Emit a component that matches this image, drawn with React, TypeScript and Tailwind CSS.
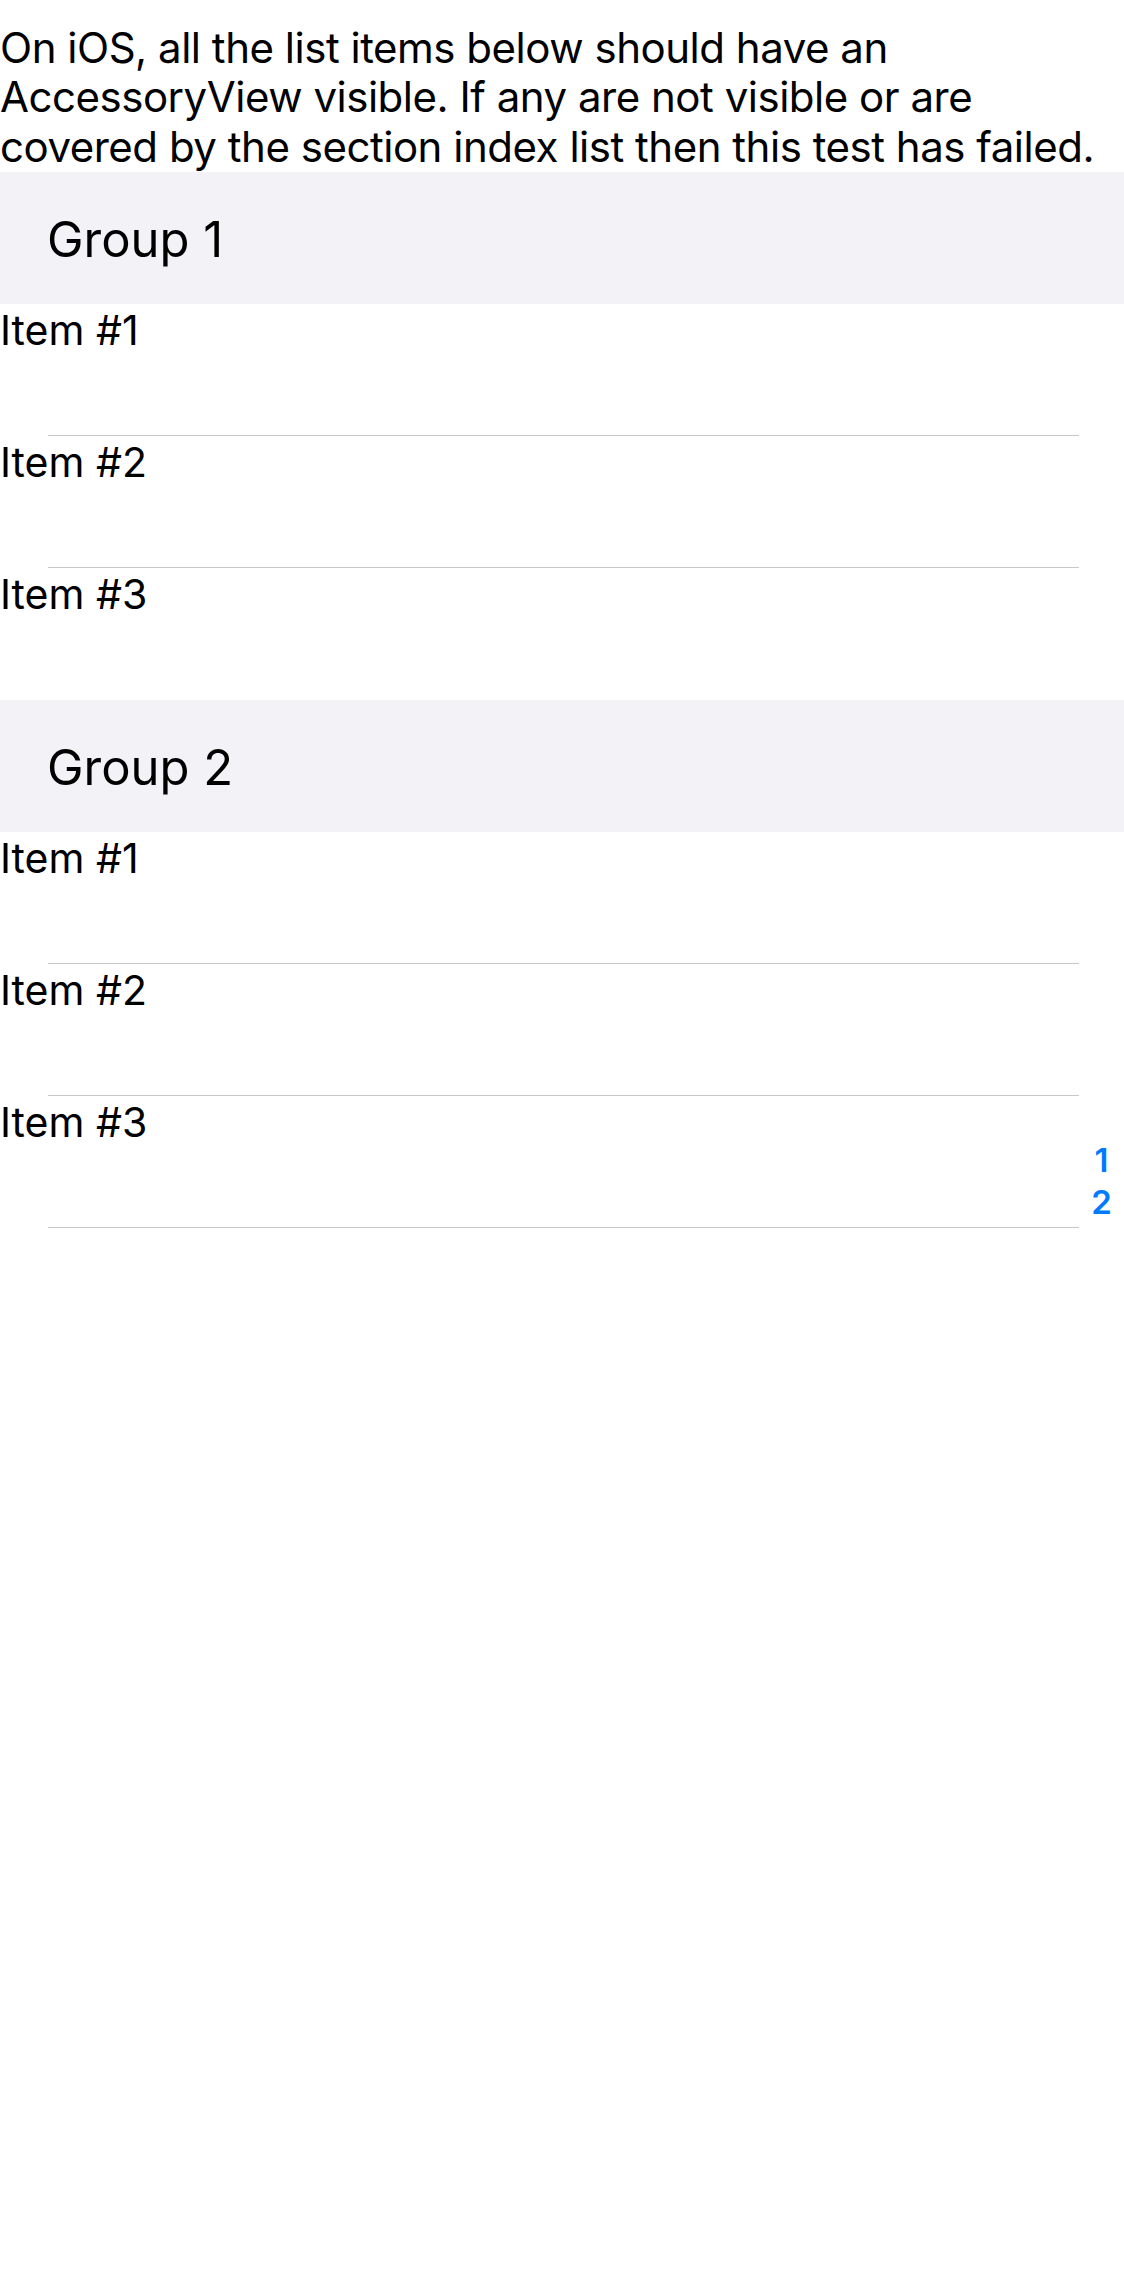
import React from 'react'

const groups = [
  { title: 'Group 1', items: ['Item #1', 'Item #2', 'Item #3'], lastLine: false },
  { title: 'Group 2', items: ['Item #1', 'Item #2', 'Item #3'], lastLine: true },
]

const font = { fontFamily: 'Inter, "Liberation Sans", Arial, sans-serif' }

export default function App() {
  return (
    <div className="relative min-h-[2286px] w-full bg-white text-black" style={font}>
      <div className="h-[172px] pt-[23px] text-[42px] leading-[49.3px] tracking-[-0.48px] whitespace-nowrap">
        On iOS, all the list items below should have an
        <br />
        AccessoryView visible. If any are not visible or are
        <br />
        covered by the section index list then this test has failed.
      </div>

      {groups.map(g => (
        <section key={g.title}>
          <div className="flex h-[132px] items-center bg-[#f2f2f7] pl-[47px] pt-1 text-[49px]">
            {g.title}
          </div>
          {g.items.map((item, i) => {
            const showLine = i < g.items.length - 1 || g.lastLine
            return (
              <div key={item} className="flex h-[132px] flex-col">
                <div className="flex-1 text-[41px] leading-[52px]">{item}</div>
                <div className={showLine ? 'ml-[48px] mr-[45px] h-px bg-[#c8c7cc]' : 'h-px'} />
              </div>
            )
          })}
        </section>
      ))}

      {/* section index */}
      <div className="absolute right-0 top-[1140px] flex w-[45px] flex-col items-center text-[33px] font-semibold leading-[41.5px] text-[#007aff]">
        <span>1</span>
        <span>2</span>
      </div>
    </div>
  )
}
